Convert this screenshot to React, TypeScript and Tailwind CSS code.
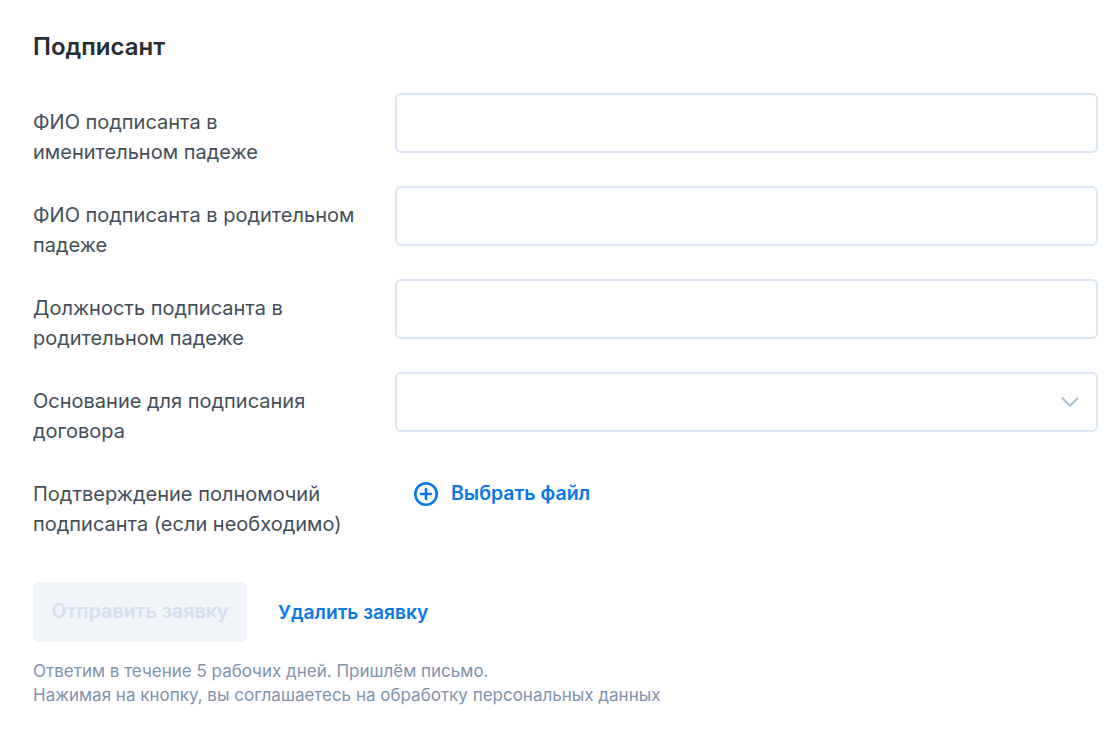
import { ChevronDown } from 'lucide-react'

const font = { fontFamily: 'Inter, "Noto Sans", sans-serif' }

const fields = [
  { label: 'ФИО подписанта в именительном падеже' },
  { label: 'ФИО подписанта в родительном падеже' },
  { label: 'Должность подписанта в родительном падеже' },
  { label: 'Основание для подписания договора', select: true }
]

function Row({ label, select }: { label: string; select?: boolean }) {
  return (
    <div className="flex">
      <label className="w-[362px] shrink-0 pr-[30px] pt-[14px] text-[20px] leading-[30px] text-[#444e58]">{label}</label>
      <div className="flex h-[60px] flex-1 items-center justify-end rounded-[6px] border-2 border-[#dbe7f3] bg-white pr-[11px]">
        {select && <ChevronDown size={30} strokeWidth={1.6} className="text-[#a9bfd6]" />}
      </div>
    </div>
  )
}

export default function App() {
  return (
    <main style={font} className="min-h-[744px] bg-white pb-[30px] pl-[33px] pr-[21px] pt-[32px]">
      <h2 className="mb-[31px] text-[24px] font-semibold leading-[30px] text-[#262d33]">Подписант</h2>

      <div className="flex flex-col gap-[19px]">
        {fields.map((field) => (
          <Row key={field.label} label={field.label} select={field.select} />
        ))}
      </div>

      <div className="mt-[33px] flex">
        <p className="w-[362px] shrink-0 pr-[10px] text-[20px] leading-[30px] text-[#444e58]">
          Подтверждение полномочий подписанта (если необходимо)
        </p>
        <button className="ml-[18px] flex h-[30px] items-center gap-[12px] text-[19.5px] font-semibold text-[#0a78e8]">
          <svg width="26" height="26" viewBox="0 0 26 26" fill="none" stroke="currentColor" strokeWidth="2.6" strokeLinecap="round">
            <circle cx="13" cy="13" r="10.7" />
            <path d="M13 8v10M8 13h10" />
          </svg>
          Выбрать файл
        </button>
      </div>

      <div className="mt-[43px] flex items-center gap-[31px]">
        <button disabled className="h-[60px] w-[214px] rounded-[6px] bg-[#f1f5f9] text-[19.7px] font-semibold text-[#d3e0f0]">
          Отправить заявку
        </button>
        <button className="text-[19.2px] font-semibold text-[#0a78e8]">Удалить заявку</button>
      </div>

      <p className="mt-[17px] text-[17px] leading-[24px] text-[#7f93ab]">
        Ответим в течение 5 рабочих дней. Пришлём письмо.
        <br />
        Нажимая на кнопку, вы соглашаетесь на обработку персональных данных
      </p>
    </main>
  )
}
